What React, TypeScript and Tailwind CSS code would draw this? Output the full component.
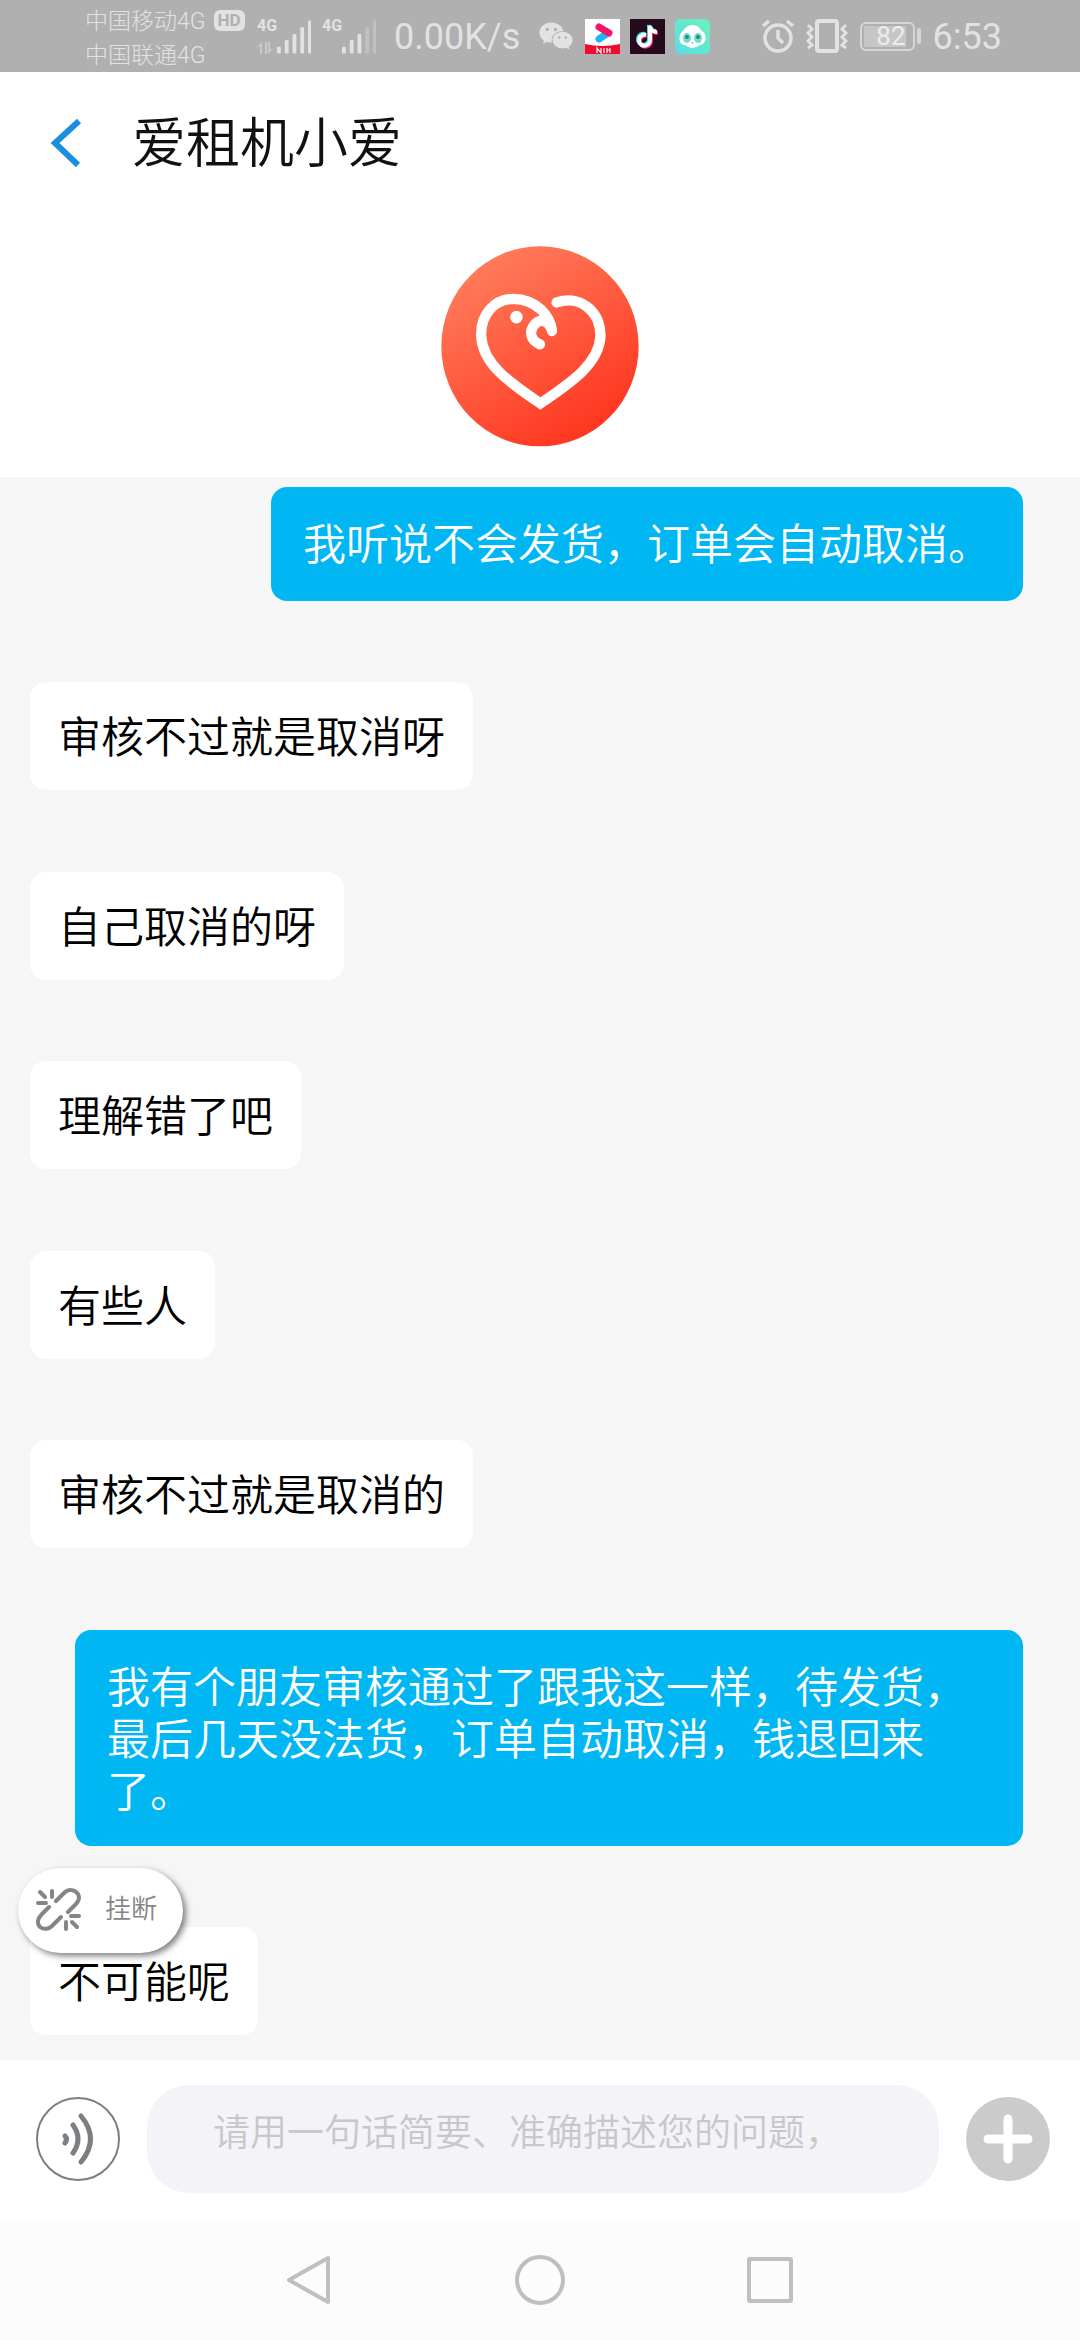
import { AiFillWechat } from "react-icons/ai";

const messages = [
  { mine: true, text: "我听说不会发货，订单会自动取消。" },
  { mine: false, text: "审核不过就是取消呀" },
  { mine: false, text: "自己取消的呀" },
  { mine: false, text: "理解错了吧" },
  { mine: false, text: "有些人" },
  { mine: false, text: "审核不过就是取消的" },
  { mine: true, text: "我有个朋友审核通过了跟我这一样，待发货，最后几天没法货，订单自动取消，钱退回来了。" },
  { mine: false, text: "不可能呢" },
];

function Signal({ level, data }: { level: number; data?: boolean }) {
  return (
    <div className="flex h-9 w-[54px] items-end justify-between">
      <div className="flex h-full flex-col justify-between">
        <span className="text-base leading-4 font-bold">4G</span>
        {data && (
          <svg width="16" height="12" viewBox="0 0 16 12" fill="currentColor" className="opacity-50">
            <path d="M0 5 L5 0 V12 H3 V5 Z M8 0 h2 v12 h-2 z M11 0 h2 v7 h3 l-5 5 z" />
          </svg>
        )}
      </div>
      <svg width="35" height="34" viewBox="0 0 35 34" fill="currentColor">
        {[27, 20, 14, 7, 0].map((y, i) => (
          <rect key={y} x={i * 8} y={y} width="4" height={34 - y} rx="1" opacity={i < level ? 1 : 0.35} />
        ))}
      </svg>
    </div>
  );
}

function StatusBar() {
  return (
    <div className="flex h-[72px] items-center justify-between bg-[#b0b0b0] pr-[78px] pl-[85px] font-normal text-[#e2e2e2]">
      <div className="flex items-center">
        <div className="w-[172px] pt-1.5 text-[23px] leading-[34px] font-light">
          <div className="flex items-center gap-2">
            <span>中国移动4G</span>
            <span className="mb-1 flex h-[21px] items-center rounded-md bg-[#e2e2e2] px-1 text-[17px] font-bold text-[#b0b0b0]">HD</span>
          </div>
          <div>中国联通4G</div>
        </div>
        <div className="flex gap-[11px]">
          <Signal level={5} data />
          <Signal level={3} />
        </div>
        <span className="ml-[18px] pt-0.5 text-4xl">0.00K/s</span>
        <div className="ml-[17px] flex items-center gap-2.5">
          <AiFillWechat size={38} />
          {/* video app */}
          <svg width="35" height="35" viewBox="0 0 35 35">
            <rect width="35" height="35" fill="#fff" />
            <path d="M14 20 L23 14" stroke="#19b5f5" strokeWidth="7" strokeLinecap="round" />
            <path d="M14 8 L24 14" stroke="#f5146c" strokeWidth="7" strokeLinecap="round" />
            <path d="M0 25 Q17 29 35 25 V35 H0 Z" fill="#f00b2d" />
            <path d="M12 34 v-5 l4 5 v-5 M19 29 v5 M22 29 v5 M22 31 h3 M25 29 v5" stroke="#fff" strokeWidth="1.2" fill="none" />
          </svg>
          {/* music note app */}
          <svg width="35" height="35" viewBox="0 0 35 35" fill="none" strokeWidth="4">
            <rect width="35" height="35" fill="#250a1d" />
            <path d="M15 15 a5.500 5.500 0 1 0 4 6 V6 q1 6 7 6" stroke="#2de9e9" />
            <path d="M17 17 a5.500 5.500 0 1 0 4 6 V8 q1 6 7 6" stroke="#f5225c" />
            <path d="M16 16 a5.500 5.500 0 1 0 4 6 V7 q1 6 7 6" stroke="#fff" />
          </svg>
          {/* panda app */}
          <svg width="35" height="35" viewBox="0 0 35 35">
            <defs>
              <linearGradient id="panda" x1="0" y1="1" x2="1" y2="0">
                <stop stopColor="#5adbe8" />
                <stop offset="1" stopColor="#6af3b8" />
              </linearGradient>
            </defs>
            <rect width="35" height="35" rx="5" fill="url(#panda)" />
            <path d="M17.500 6 C22 6 25 9 27 12 C33 15 31 26 25 26 Q17 32 10 26 C3 26 3 15 8 12 C10 9 13 6 17.500 6 Z" fill="#fff" />
            <ellipse cx="12" cy="19" rx="4" ry="5" fill="#6fdccb" />
            <ellipse cx="23" cy="19" rx="4" ry="5" fill="#6fdccb" />
            <circle cx="12" cy="18" r="2" fill="#357f85" />
            <circle cx="23" cy="18" r="2" fill="#357f85" />
            <path d="M16 23 h3 l-1.500 2 z" fill="#6fdccb" />
          </svg>
        </div>
      </div>
      <div className="flex items-center gap-3">
        <svg width="32" height="34" viewBox="0 0 32 34" fill="none" stroke="currentColor" strokeWidth="3.500">
          <circle cx="16" cy="19" r="13" />
          <path d="M16 11 V19 L21 24 M1 7 L7 2 M31 7 L25 2" />
        </svg>
        <svg width="42" height="34" viewBox="0 0 42 34" fill="none" stroke="currentColor" strokeWidth="3">
          <rect x="11" y="2" width="20" height="30" rx="2" strokeWidth="4" />
          <path d="M2 6 L6 10 L2 14 L6 18 L2 22 L6 26 L2 29 M40 6 L36 10 L40 14 L36 18 L40 22 L36 26 L40 29" />
        </svg>
        <div className="flex items-center gap-0.5">
          <span className="flex h-[29px] w-[55px] items-center rounded-md border-2 border-[#d6d6d6] p-0.5">
            <span className="flex h-full w-[42px] items-center justify-end bg-[#c6c6c6] text-[26px] text-[#ececec]">82</span>
          </span>
          <span className="h-4 w-1 rounded-sm bg-[#d6d6d6]" />
        </div>
        <span className="pt-0.5 text-4xl">6:53</span>
      </div>
    </div>
  );
}

function Logo() {
  return (
    <svg width="198" height="201" viewBox="32 29 596 603" role="img" aria-label="爱租机">
      <defs>
        <linearGradient id="logo" x1="0.200" y1="0.050" x2="0.750" y2="0.950">
          <stop stopColor="#ff7d5c" />
          <stop offset="1" stopColor="#ff351f" />
        </linearGradient>
      </defs>
      <ellipse cx="330" cy="330" rx="297" ry="301" fill="url(#logo)" />
      <g fill="none" stroke="#fff" strokeWidth="31" strokeLinecap="round">
        <path d="M380 198 C450 175 512 222 512 300 C508 380 430 435 331 502 C240 440 158 385 153 300 C150 235 192 188 250 187 C320 188 362 240 366 284" />
        <path d="M362 272 C350 250 328 248 314 264 C294 288 304 314 330 324" />
      </g>
      <circle cx="259" cy="242" r="19" fill="#fff" />
    </svg>
  );
}

function Bubble({ mine, text }: { mine: boolean; text: string }) {
  if (mine) {
    return (
      <li className="ml-[45px] min-h-[114px] self-end rounded-2xl bg-[#00b6f3] px-8 pt-8 pb-7 text-[43px] leading-[52px] text-white">
        {text}
      </li>
    );
  }
  return (
    <li className="self-start rounded-2xl bg-white px-7 pt-[30px] pb-[26px] text-[43px] leading-[52px] text-black">
      {text}
    </li>
  );
}

export default function App() {
  return (
    <div className="flex min-h-screen flex-col bg-white font-['Roboto','Noto_Sans_CJK_SC',sans-serif] font-[350]">
      <StatusBar />

      <header>
        <div className="flex h-[142px] items-center gap-[50px] pl-[50px]">
          <button aria-label="返回">
            <svg width="32" height="48" viewBox="0 0 32 48" fill="none" stroke="#1a8ee0" strokeWidth="6">
              <path d="M29 2 L5 24 L28 46" />
            </svg>
          </button>
          <h1 className="pt-1 text-[54px] leading-[72px] text-[#111]">爱租机小爱</h1>
        </div>
        <div className="flex justify-center pt-8 pb-[30px]">
          <Logo />
        </div>
      </header>

      <main className="relative flex flex-1 flex-col bg-[#f6f6f6] pt-2.5 pr-[57px] pb-[25px] pl-[30px]">
        <ul className="flex flex-1 flex-col justify-between gap-20">
          {messages.map((m) => (
            <Bubble key={m.text} mine={m.mine} text={m.text} />
          ))}
        </ul>
        {/* floats over the last message */}
        <button className="absolute bottom-[107px] left-[18px] flex h-[85px] items-center gap-6 rounded-full bg-white pr-[26px] pb-0.5 pl-[18px] text-[26px] text-[#858585] shadow-[3px_3px_6px_rgba(0,0,0,0.5)]">
          <svg width="45" height="43" viewBox="0 0 45 43" fill="none" stroke="currentColor" strokeWidth="4" strokeLinecap="round">
            <path d="M20 13 L28 5 C33 0 39 2 42 6 C44 10 43 13 40 16 L32 24" />
            <path d="M13 19 L6 26 C1 31 1 36 4 39 C8 42 13 41 16 38 L25 29" />
            <path d="M4 4 L9 9 M16 3 V9 M2 15 H10 M35 28 H43 M30 34 V41 M36 34 L41 39" />
          </svg>
          挂断
        </button>
      </main>

      <footer>
        <div className="flex items-center gap-[27px] bg-white pt-[25px] pr-[30px] pb-[27px] pl-9">
          <button aria-label="语音输入" className="shrink-0">
            <svg width="84" height="84" viewBox="0 0 84 84" fill="none" stroke="#7c7f82" strokeLinecap="round">
              <circle cx="42" cy="42" r="41" strokeWidth="2" />
              <path d="M29 39 Q32 42 29 46" strokeWidth="5" />
              <path d="M37 28 Q47 42 37 56" strokeWidth="5" />
              <path d="M45 19 Q64 42 45 65" strokeWidth="5" />
            </svg>
          </button>
          <input
            type="text"
            aria-label="问题"
            placeholder="请用一句话简要、准确描述您的问题，"
            className="h-[108px] min-w-0 flex-1 rounded-[42px] bg-[#f3f3f8] px-[66px] pb-3 text-[37px] outline-none placeholder:text-[#c8c8ca]"
          />
          <button aria-label="更多" className="flex size-[84px] shrink-0 items-center justify-center rounded-full bg-[#cbcbcb]">
            <svg width="50" height="50" viewBox="0 0 50 50" stroke="#fff" strokeWidth="9" strokeLinecap="round">
              <path d="M25 5 V45 M5 25 H45" />
            </svg>
          </button>
        </div>
        <nav className="flex h-[120px] items-center justify-center gap-[180px] bg-[#fcfcfc] text-[#bfbfbf]">
          <button aria-label="后退">
            <svg width="50" height="50" viewBox="0 0 50 50" fill="none" stroke="currentColor" strokeWidth="4" strokeLinejoin="round">
              <path d="M43 3 V47 L4 25 Z" />
            </svg>
          </button>
          <button aria-label="主屏幕">
            <svg width="50" height="50" viewBox="0 0 50 50" fill="none" stroke="currentColor" strokeWidth="4">
              <circle cx="25" cy="25" r="23" />
            </svg>
          </button>
          <button aria-label="最近任务">
            <svg width="50" height="50" viewBox="0 0 50 50" fill="none" stroke="currentColor" strokeWidth="4">
              <rect x="4" y="4" width="42" height="42" rx="1" />
            </svg>
          </button>
        </nav>
      </footer>
    </div>
  );
}
